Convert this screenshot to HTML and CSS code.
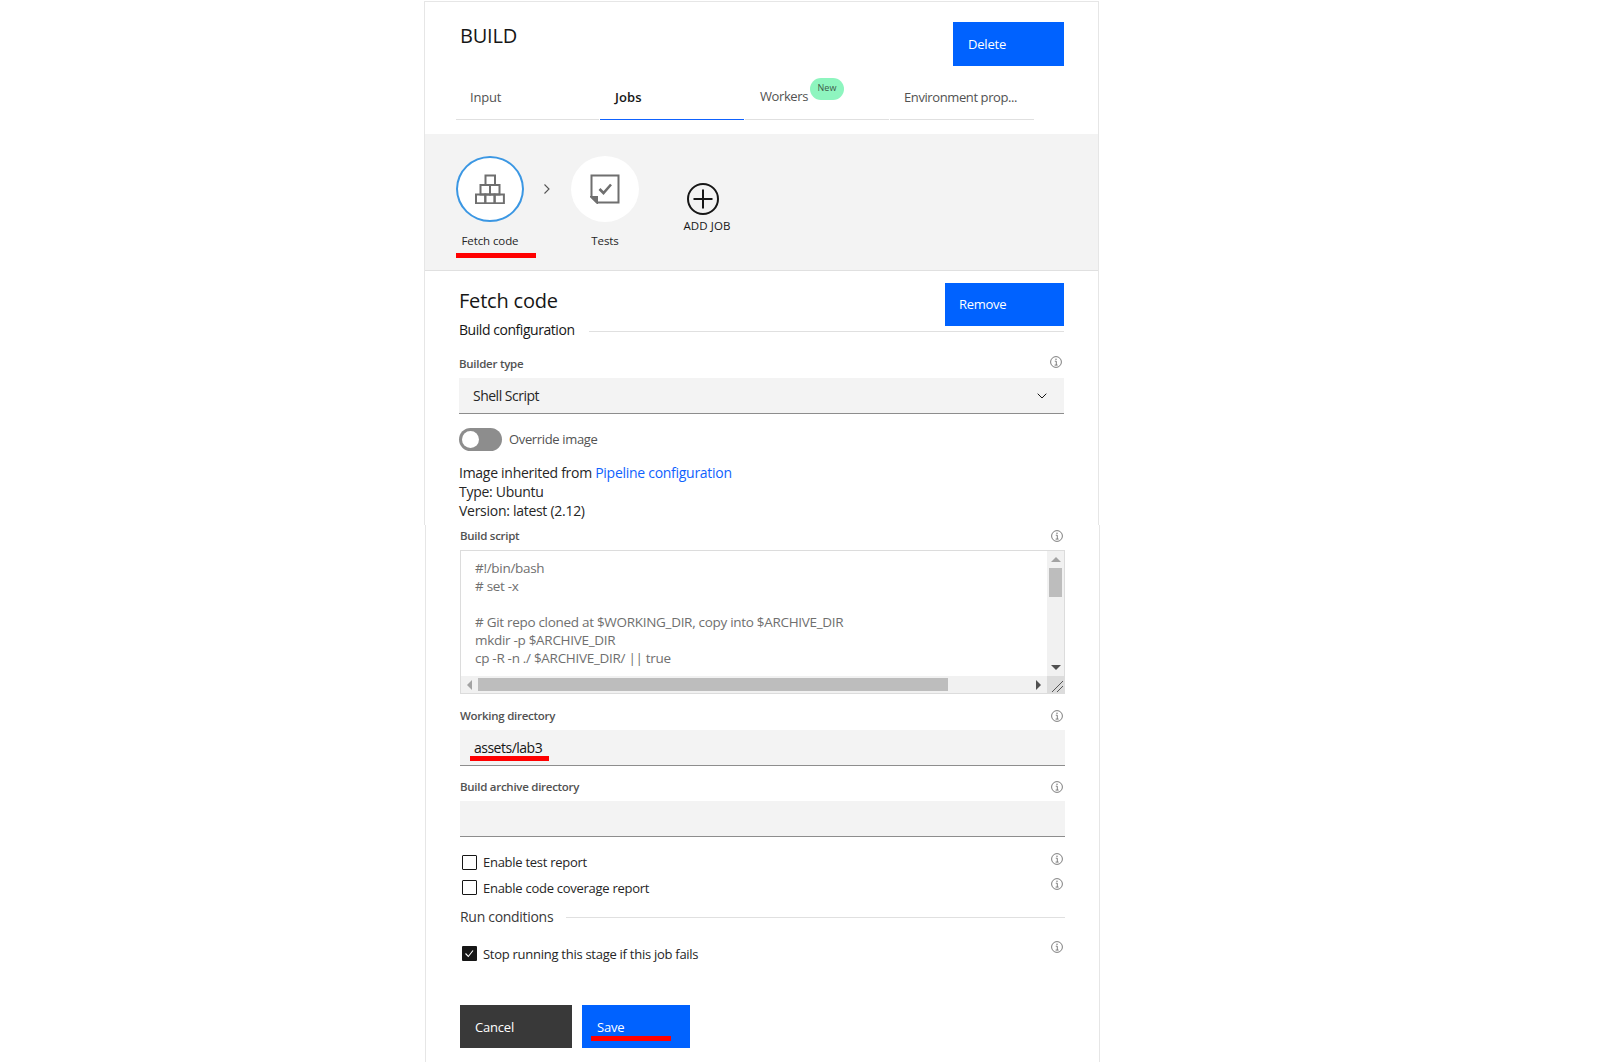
FILE: index.html
```html
<!DOCTYPE html>
<html lang="en">

<head>
    <meta charset="UTF-8">
    <meta name="viewport" content="width=device-width, initial-scale=1.0">
    <title>Build stage</title>
    <link rel="stylesheet" href="styles.css">
</head>

<body>
    <svg class="icon-defs" width="0" height="0">
        <symbol id="info" viewBox="0 0 12 12">
            <circle cx="6" cy="6" r="5.4" fill="none" stroke="#6f6f6f" stroke-width="0.9" />
            <path d="M4.8 5.2H6.3V9M4.6 9.1H7.6" fill="none" stroke="#6f6f6f" stroke-width="0.9" />
            <circle cx="6" cy="3.3" r="0.7" fill="#6f6f6f" />
        </symbol>
    </svg>

    <div class="page">
        <div class="panel panel-top">
            <div class="panel-head">
                <h1 class="panel-title">BUILD</h1>
                <button class="btn btn-primary btn-delete">Delete</button>
            </div>

            <div class="tabs">
                <a class="tab">Input</a>
                <a class="tab tab-active">Jobs</a>
                <a class="tab tab-workers">Workers<span class="badge">New</span></a>
                <a class="tab tab-env">Environment prop...</a>
            </div>

            <div class="stages">
                <div class="stage stage-selected">
                    <div class="stage-circle">
                        <svg width="30" height="30" viewBox="0 0 30 30" fill="none" stroke="#6f6f6f" stroke-width="2">
                            <rect x="10.5" y="1.5" width="9.5" height="9.5" />
                            <rect x="5.5" y="11" width="9.5" height="9.5" />
                            <rect x="15" y="11" width="9.5" height="9.5" />
                            <rect x="1" y="20.5" width="9.3" height="8.8" />
                            <rect x="10.3" y="20.5" width="9.3" height="8.8" />
                            <rect x="19.6" y="20.5" width="9.3" height="8.8" />
                        </svg>
                    </div>
                    <span class="stage-label">Fetch code</span>
                    <span class="mark mark-fetch"></span>
                </div>
                <svg class="stage-arrow" width="8" height="12" viewBox="0 0 8 12" fill="none" stroke="#525252" stroke-width="1.1">
                    <path d="M1.5 1.5L6 6L1.5 10.5" />
                </svg>
                <div class="stage">
                    <div class="stage-circle stage-circle-plain">
                        <svg width="30" height="30" viewBox="0 0 30 30" fill="none" stroke="#6f6f6f" stroke-width="2">
                            <path d="M1.5 1.5H28.5V28.5H7L1.5 23Z" />
                            <path d="M1.5 23H7V28.5Z" fill="#6f6f6f" />
                            <path d="M9.5 15L13.5 19L21 10.5" stroke-width="2.6" />
                        </svg>
                    </div>
                    <span class="stage-label">Tests</span>
                </div>
                <div class="add-job">
                    <svg class="add-job-icon" width="32" height="32" viewBox="0 0 32 32" fill="none" stroke="#161616" stroke-width="2">
                        <circle cx="16" cy="16" r="15" />
                        <path d="M16 6.5V25.5M6.5 16H25.5" />
                    </svg>
                    <span class="add-job-label">ADD JOB</span>
                </div>
            </div>

            <div class="job-form">
                <div class="job-head">
                    <h2 class="job-title">Fetch code</h2>
                    <button class="btn btn-primary btn-remove">Remove</button>
                </div>
                <div class="divider divider-build"><span>Build configuration</span></div>

                <div class="field-label field-label-first">
                    <span>Builder type</span>
                    <svg class="info"><use href="#info" /></svg>
                </div>
                <div class="field-input select-input">
                    <span>Shell Script</span>
                    <svg width="10" height="6" viewBox="0 0 10 6" fill="none" stroke="#161616" stroke-width="1">
                        <path d="M0.7 0.7L5 5L9.3 0.7" />
                    </svg>
                </div>

                <div class="toggle-row">
                    <span class="toggle"></span>
                    <span class="toggle-label">Override image</span>
                </div>

                <div class="image-info">
                    <div>Image inherited from <a class="link">Pipeline configuration</a></div>
                    <div>Type: Ubuntu</div>
                    <div>Version: latest (2.12)</div>
                </div>
            </div>
        </div>

        <div class="panel panel-bottom">
            <div class="job-form job-form-lower">
                <div class="field-label field-label-script">
                    <span>Build script</span>
                    <svg class="info"><use href="#info" /></svg>
                </div>
                <div class="script-box">
                    <div class="script-text">#!/bin/bash
# set -x

# Git repo cloned at $WORKING_DIR, copy into $ARCHIVE_DIR
mkdir -p $ARCHIVE_DIR
cp -R -n ./ $ARCHIVE_DIR/ || true</div>
                    <div class="scroll-v">
                        <span class="arrow arrow-up"></span>
                        <span class="thumb-v"></span>
                        <span class="arrow arrow-down"></span>
                    </div>
                    <div class="scroll-h">
                        <span class="arrow arrow-left"></span>
                        <span class="thumb-h"></span>
                        <span class="arrow arrow-right"></span>
                    </div>
                    <div class="resizer">
                        <svg width="17" height="17" viewBox="0 0 17 17" stroke="#555" stroke-width="1">
                            <path d="M5 16L16 5M10 16L16 10" />
                        </svg>
                    </div>
                </div>

                <div class="field-label field-label-dir">
                    <span>Working directory</span>
                    <svg class="info"><use href="#info" /></svg>
                </div>
                <div class="field-input text-input">
                    <span>assets/lab3</span>
                    <span class="mark mark-dir"></span>
                </div>

                <div class="field-label field-label-next">
                    <span>Build archive directory</span>
                    <svg class="info"><use href="#info" /></svg>
                </div>
                <div class="field-input"></div>

                <div class="check-row check-row-first">
                    <span class="check"></span>
                    <span class="check-text">Enable test report</span>
                    <svg class="info"><use href="#info" /></svg>
                </div>
                <div class="check-row check-row-second">
                    <span class="check"></span>
                    <span class="check-text">Enable code coverage report</span>
                    <svg class="info"><use href="#info" /></svg>
                </div>

                <div class="divider divider-run"><span>Run conditions</span></div>

                <div class="check-row check-row-stop">
                    <span class="check check-on">
                        <svg width="15" height="15" viewBox="0 0 15 15" fill="none" stroke="#fff" stroke-width="1.1">
                            <path d="M3.5 7.5L6.3 10.5L11 4.5" />
                        </svg>
                    </span>
                    <span class="check-text">Stop running this stage if this job fails</span>
                    <svg class="info"><use href="#info" /></svg>
                </div>

                <div class="actions">
                    <button class="btn btn-dark btn-cancel">Cancel</button>
                    <button class="btn btn-primary btn-save">Save<span class="mark mark-save"></span></button>
                </div>
            </div>
        </div>
    </div>
</body>

</html>
```

FILE: styles.css
```css
body {
    font-family: "Open Sans", "Noto Sans", sans-serif;
    background-color: #fff;
    color: #161616;
    margin: 0;
    padding: 0;
    overflow: hidden;
}

.icon-defs {
    position: absolute;
}

.page {
    margin-left: 424px;
    width: 675px;
    padding-top: 1px;
}

.panel {
    box-sizing: border-box;
    width: 675px;
    border-left: 1px solid #e6e6e6;
    border-right: 1px solid #e6e6e6;
}

.panel-top {
    border-top: 1px solid #e6e6e6;
}

.panel-bottom {
    margin-left: 1px;
}

/* header */
.panel-head {
    display: flex;
    justify-content: space-between;
    align-items: flex-start;
    padding: 20px 34px 0 35px;
}

.panel-title {
    margin: 1px 0 0 0;
    font-size: 20px;
    line-height: 26px;
    font-weight: 400;
    letter-spacing: -0.2px;
}

.btn {
    box-sizing: border-box;
    height: 43px;
    border: none;
    border-radius: 0;
    padding: 0 15px;
    text-align: left;
    font-family: inherit;
    font-size: 13px;
    color: #fff;
    letter-spacing: -0.2px;
}

.btn-primary {
    background-color: #0062ff;
}

.btn-dark {
    background-color: #393939;
}

.btn-delete {
    width: 111px;
    height: 44px;
}

.btn-remove {
    width: 119px;
    padding: 0 14px 2px 14px;
    letter-spacing: -0.3px;
}

.btn-cancel {
    width: 112px;
}

.btn-save {
    width: 108px;
    position: relative;
}

/* tabs */
.tabs {
    display: flex;
    gap: 1px;
    margin: 10px 0 0 31px;
}

.tab {
    box-sizing: border-box;
    width: 144px;
    height: 44px;
    padding: 13px 0 0 14px;
    font-size: 13px;
    line-height: 16px;
    color: #525252;
    letter-spacing: -0.2px;
    border-bottom: 1px solid #e0e0e0;
}

.tab:first-child {
    width: 143px;
}

.tab-active {
    padding-left: 15px;
    font-weight: 600;
    color: #161616;
    letter-spacing: 0.1px;
    border-bottom-color: #0f62fe;
}

.tab-workers {
    padding-left: 15px;
    padding-top: 12px;
    letter-spacing: -0.4px;
    position: relative;
}

.tab-env {
    letter-spacing: -0.4px;
}

.badge {
    position: absolute;
    left: 65px;
    top: 2px;
    width: 34px;
    height: 22px;
    border-radius: 11px;
    background-color: #8ef5bf;
    font-size: 9px;
    line-height: 20px;
    letter-spacing: 0;
    text-align: center;
    color: #3d5a4a;
}

/* job stages */
.stages {
    box-sizing: border-box;
    display: flex;
    align-items: flex-start;
    height: 137px;
    margin-top: 14px;
    padding: 22px 0 0 31px;
    background-color: #f3f3f3;
    border-bottom: 1px solid #e0e0e0;
}

.stage {
    position: relative;
    display: flex;
    flex-direction: column;
    align-items: center;
    width: 68px;
}

.stage-circle {
    box-sizing: border-box;
    display: flex;
    align-items: center;
    justify-content: center;
    width: 68px;
    height: 66px;
    background-color: #fff;
    border: 2px solid #3b97e3;
    border-radius: 50%;
}

.stage-circle-plain {
    border-color: #fff;
}

.stage-label {
    margin-top: 11px;
    font-size: 11.5px;
    line-height: 16px;
    letter-spacing: -0.1px;
    color: #262626;
}

.stage-arrow {
    margin: 27px 20px 0 19px;
}

.add-job {
    display: flex;
    flex-direction: column;
    align-items: center;
    width: 64px;
    margin: 27px 0 0 36px;
}

.add-job-icon {
    margin-right: 8px;
}

.add-job-label {
    margin-top: 3px;
    font-size: 11.5px;
    line-height: 16px;
    letter-spacing: 0.1px;
    white-space: nowrap;
}

.mark {
    position: absolute;
    height: 5px;
    background-color: #f00;
}

.mark-fetch {
    left: 0;
    top: 97px;
    width: 80px;
}

.mark-dir {
    left: 10px;
    top: 26px;
    width: 79px;
}

.mark-save {
    left: 9px;
    top: 31px;
    width: 80px;
}

/* form */
.job-form {
    padding: 12px 34px 5px 34px;
}

.job-form-lower {
    padding: 2px 34px 14px 34px;
}

.job-head {
    display: flex;
    justify-content: space-between;
    align-items: flex-start;
}

.job-title {
    margin: 5px 0 0 0;
    font-size: 20px;
    line-height: 26px;
    font-weight: 400;
    letter-spacing: -0.2px;
}

.divider {
    display: flex;
    align-items: center;
    gap: 13px;
    height: 20px;
    font-size: 14px;
    letter-spacing: -0.3px;
}

.divider span {
    margin-top: -2px;
}

.divider::after {
    content: "";
    flex: 1;
    height: 1px;
    background-color: #e0e0e0;
}

.divider-build {
    margin-top: -5px;
    gap: 14px;
    letter-spacing: -0.45px;
}

.divider-build span {
    margin-top: -4px;
}

.divider-run {
    margin-top: 12px;
    color: #393939;
}

.field-label {
    display: flex;
    justify-content: space-between;
    align-items: center;
    height: 16px;
    font-size: 11.5px;
    font-weight: 600;
    color: #525252;
    letter-spacing: -0.27px;
}

.field-label-first {
    margin-top: 15px;
}

.field-label-first span,
.field-label-script span {
    margin-top: -2px;
}

.field-label-script {
    margin-top: 1px;
}

.field-label-dir {
    margin-top: 13px;
}

.field-label-next {
    margin-top: 12px;
}

.info {
    flex: none;
    width: 12px;
    height: 12px;
    margin-right: 2px;
}

.field-label .info {
    margin-top: 2px;
}

.field-label-first .info {
    margin-top: -4px;
}

.field-label-script .info {
    margin-top: 0;
}

.field-input {
    box-sizing: border-box;
    position: relative;
    display: flex;
    align-items: center;
    justify-content: space-between;
    height: 36px;
    margin-top: 7px;
    padding: 0 17px 0 14px;
    background-color: #f3f3f3;
    border-bottom: 1px solid #8d8d8d;
    font-size: 14px;
    letter-spacing: -0.5px;
}

.select-input {
    margin-top: 6px;
    color: #262626;
}

.toggle-row {
    display: flex;
    align-items: center;
    gap: 7px;
    margin-top: 14px;
    font-size: 13px;
    letter-spacing: -0.35px;
    color: #525252;
}

.toggle-label {
    margin-top: -2px;
}

.toggle {
    position: relative;
    width: 43px;
    height: 23px;
    border-radius: 12px;
    background-color: #8d8d8d;
}

.toggle::before {
    content: "";
    position: absolute;
    left: 3px;
    top: 3px;
    width: 17px;
    height: 17px;
    border-radius: 50%;
    background-color: #fff;
}

.image-info {
    margin-top: 12px;
    font-size: 14px;
    line-height: 19px;
    letter-spacing: -0.28px;
    color: #262626;
}

.link {
    color: #0f62fe;
}

/* build script box */
.script-box {
    box-sizing: border-box;
    display: grid;
    grid-template-columns: 1fr 17px;
    grid-template-rows: 1fr 17px;
    height: 144px;
    margin-top: 6px;
    border: 1px solid #dcdcdc;
}

.script-text {
    padding: 8px 14px 0 14px;
    font-size: 13.5px;
    line-height: 18px;
    letter-spacing: -0.3px;
    color: #6f6f6f;
    white-space: pre;
    overflow: hidden;
}

.scroll-v,
.scroll-h {
    display: flex;
    align-items: center;
    justify-content: space-between;
    background-color: #f1f1f1;
}

.scroll-v {
    flex-direction: column;
    padding: 6px 0 6px 0;
}

.scroll-h {
    padding: 0 6px 0 6px;
}

.thumb-v {
    width: 13px;
    height: 29px;
    margin: -4px 0 auto 0;
    background-color: #bdbdbd;
}

.thumb-h {
    width: 470px;
    height: 13px;
    margin: 0 auto 0 -3px;
    background-color: #bdbdbd;
}

.arrow {
    width: 0;
    height: 0;
    border-style: solid;
    border-color: transparent;
}

.arrow-up {
    border-width: 0 5px 5px 5px;
    border-bottom-color: #a3a3a3;
    margin-bottom: 10px;
}

.arrow-down {
    border-width: 5px 5px 0 5px;
    border-top-color: #505050;
}

.arrow-left {
    border-width: 5px 5px 5px 0;
    border-right-color: #a3a3a3;
    margin-right: 9px;
}

.arrow-right {
    border-width: 5px 0 5px 5px;
    border-left-color: #505050;
}

.resizer {
    background-color: #dcdcdc;
}

/* checkboxes */
.check-row {
    display: flex;
    align-items: center;
    gap: 6px;
    height: 15px;
    padding-left: 2px;
    font-size: 13px;
    letter-spacing: -0.27px;
    color: #262626;
}

.check-row .info {
    margin-left: auto;
    margin-top: -8px;
}

.check-row-first {
    margin-top: 18px;
}

.check-row-first .check-text {
    margin-top: -2px;
}

.check-row-second {
    margin-top: 10px;
}

.check-row-stop {
    margin-top: 19px;
}

.check-row-stop .info {
    margin-top: -14px;
}

.check {
    box-sizing: border-box;
    width: 15px;
    height: 15px;
    border: 1px solid #161616;
    border-radius: 1px;
}

.check-on {
    border: none;
    background-color: #161616;
}

.check-on svg {
    display: block;
}

.actions {
    display: flex;
    gap: 10px;
    margin-top: 44px;
}
```
